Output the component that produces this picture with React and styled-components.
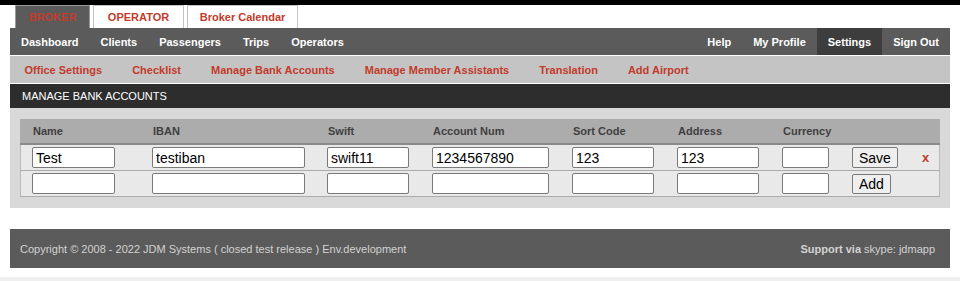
import { createGlobalStyle, styled } from "styled-components";

const GlobalStyle = createGlobalStyle`
  html, body {
    margin: 0;
    padding: 0;
    background: #fff;
    font-family: "Liberation Sans", Arial, Helvetica, sans-serif;
  }
`;

const Page = styled.div`
  width: 960px;
  height: 281px;
  overflow: hidden;
  display: flex;
  flex-direction: column;
`;

const TopStrip = styled.div`
  height: 5px;
  background: #000;
`;

const Wrap = styled.div`
  margin: 0 10px;
  display: flex;
  flex-direction: column;
`;

const Tabs = styled.div`
  display: flex;
  gap: 3px;
  padding-left: 5px;
  height: 23px;
`;

const Tab = styled.div`
  display: flex;
  align-items: center;
  justify-content: center;
  box-sizing: border-box;
  width: ${(p) => p.$w}px;
  border: 1px solid ${(p) => (p.$active ? "#9a9a9a" : "#c4c4c4")};
  border-bottom: none;
  background: ${(p) => (p.$active ? "#5b5b5b" : "#fff")};
  color: #c23b2b;
  font-size: 11px;
  font-weight: bold;
`;

const NavBar = styled.div`
  display: flex;
  height: 27px;
  background: #5b5b5b;
  border-bottom: 1px solid #fff;
`;

const NavItem = styled.div`
  display: flex;
  align-items: center;
  padding: 0 11px;
  color: #fff;
  font-size: 11px;
  font-weight: bold;
  background: ${(p) => (p.$active ? "#3d3d3d" : "transparent")};
`;

const Spacer = styled.div`
  flex: 1;
`;

const SubNav = styled.div`
  display: flex;
  height: 27px;
  padding-left: 0.5px;
  background: #c4c4c4;
  border-bottom: 1px solid #fff;
`;

const SubItem = styled.div`
  display: flex;
  align-items: center;
  padding: 0 16px 0 14px;
  color: #c23b2b;
  font-size: 11px;
  font-weight: bold;
`;

const SectionHead = styled.div`
  height: 24px;
  display: flex;
  align-items: center;
  padding-left: 12px;
  background: #2d2d2d;
  color: #fff;
  font-size: 11px;
`;

const Content = styled.div`
  background: #d9d9d9;
  padding: 11px 10px 11px;
`;

const cols = "120px 175px 105px 140px 105px 105px 70px 70px 30px";

const HeadRow = styled.div`
  display: grid;
  grid-template-columns: ${cols};
  height: 24px;
  background: #acacac;
  border-bottom: 2px solid #8a8a8a;
`;

const HeadCell = styled.div`
  display: flex;
  align-items: center;
  padding-left: 13px;
  color: #3f3f3f;
  font-size: 11px;
  font-weight: bold;
`;

const Row = styled.div`
  display: grid;
  grid-template-columns: ${cols};
  height: 25px;
  background: #e9e9e9;
  border-bottom: 1px solid #ababab;
  border-left: 1px solid #b8b8b8;
  border-right: 1px solid #b8b8b8;
`;

const Cell = styled.div`
  display: flex;
  align-items: center;
  padding-left: 11px;
`;

const Field = styled.input`
  box-sizing: border-box;
  width: ${(p) => p.$w}px;
  height: 21px;
  padding: 1px 3px;
  border: 1px solid #7a7a7a;
  border-radius: 2px;
  background: #fff;
  font-family: "Liberation Sans", Arial, sans-serif;
  font-size: 14px;
  color: #000;
  outline: none;
`;

const Btn = styled.button`
  box-sizing: border-box;
  height: ${(p) => p.$h}px;
  padding: 0 6px;
  border: 1px solid #7a7a7a;
  border-radius: 2px;
  background: #efefef;
  font-family: "Liberation Sans", Arial, sans-serif;
  font-size: 14px;
  color: #000;
`;

const Remove = styled.span`
  color: #c23b2b;
  font-size: 13px;
  font-weight: bold;
`;

const Footer = styled.div`
  margin-top: 21px;
  height: 39px;
  display: flex;
  align-items: center;
  justify-content: space-between;
  padding: 0 15px 0 10px;
  background: #5b5b5b;
  color: #d2d2d2;
  font-size: 11px;
`;

const Bottom = styled.div`
  margin-top: 9px;
  height: 4px;
  background: #efefef;
`;

const widths = [83, 153, 82, 117, 82, 82, 47];

export default function App() {
  const saved = ["Test", "testiban", "swift11", "1234567890", "123", "123", ""];
  return (
    <Page>
      <GlobalStyle />
      <TopStrip />
      <Wrap>
        <Tabs>
          <Tab $active $w={75}>BROKER</Tab>
          <Tab $w={91}>OPERATOR</Tab>
          <Tab $w={111}>Broker Calendar</Tab>
        </Tabs>
        <NavBar>
          <NavItem>Dashboard</NavItem>
          <NavItem>Clients</NavItem>
          <NavItem>Passengers</NavItem>
          <NavItem>Trips</NavItem>
          <NavItem>Operators</NavItem>
          <Spacer />
          <NavItem>Help</NavItem>
          <NavItem>My Profile</NavItem>
          <NavItem $active>Settings</NavItem>
          <NavItem>Sign Out</NavItem>
        </NavBar>
        <SubNav>
          <SubItem>Office Settings</SubItem>
          <SubItem>Checklist</SubItem>
          <SubItem>Manage Bank Accounts</SubItem>
          <SubItem>Manage Member Assistants</SubItem>
          <SubItem>Translation</SubItem>
          <SubItem>Add Airport</SubItem>
        </SubNav>
        <SectionHead>MANAGE BANK ACCOUNTS</SectionHead>
        <Content>
          <HeadRow>
            <HeadCell>Name</HeadCell>
            <HeadCell>IBAN</HeadCell>
            <HeadCell>Swift</HeadCell>
            <HeadCell>Account Num</HeadCell>
            <HeadCell>Sort Code</HeadCell>
            <HeadCell>Address</HeadCell>
            <HeadCell>Currency</HeadCell>
            <HeadCell />
            <HeadCell />
          </HeadRow>
          <Row>
            {saved.map((v, i) => (
              <Cell key={i}>
                <Field $w={widths[i]} defaultValue={v} />
              </Cell>
            ))}
            <Cell>
              <Btn $h={21}>Save</Btn>
            </Cell>
            <Cell>
              <Remove>x</Remove>
            </Cell>
          </Row>
          <Row>
            {widths.map((w, i) => (
              <Cell key={i}>
                <Field $w={w} defaultValue="" />
              </Cell>
            ))}
            <Cell>
              <Btn $h={20}>Add</Btn>
            </Cell>
            <Cell />
          </Row>
        </Content>
        <Footer>
          <span>Copyright © 2008 - 2022 JDM Systems ( closed test release ) Env.development</span>
          <span>
            <b>Support via</b> skype: jdmapp
          </span>
        </Footer>
      </Wrap>
      <Bottom />
    </Page>
  );
}
